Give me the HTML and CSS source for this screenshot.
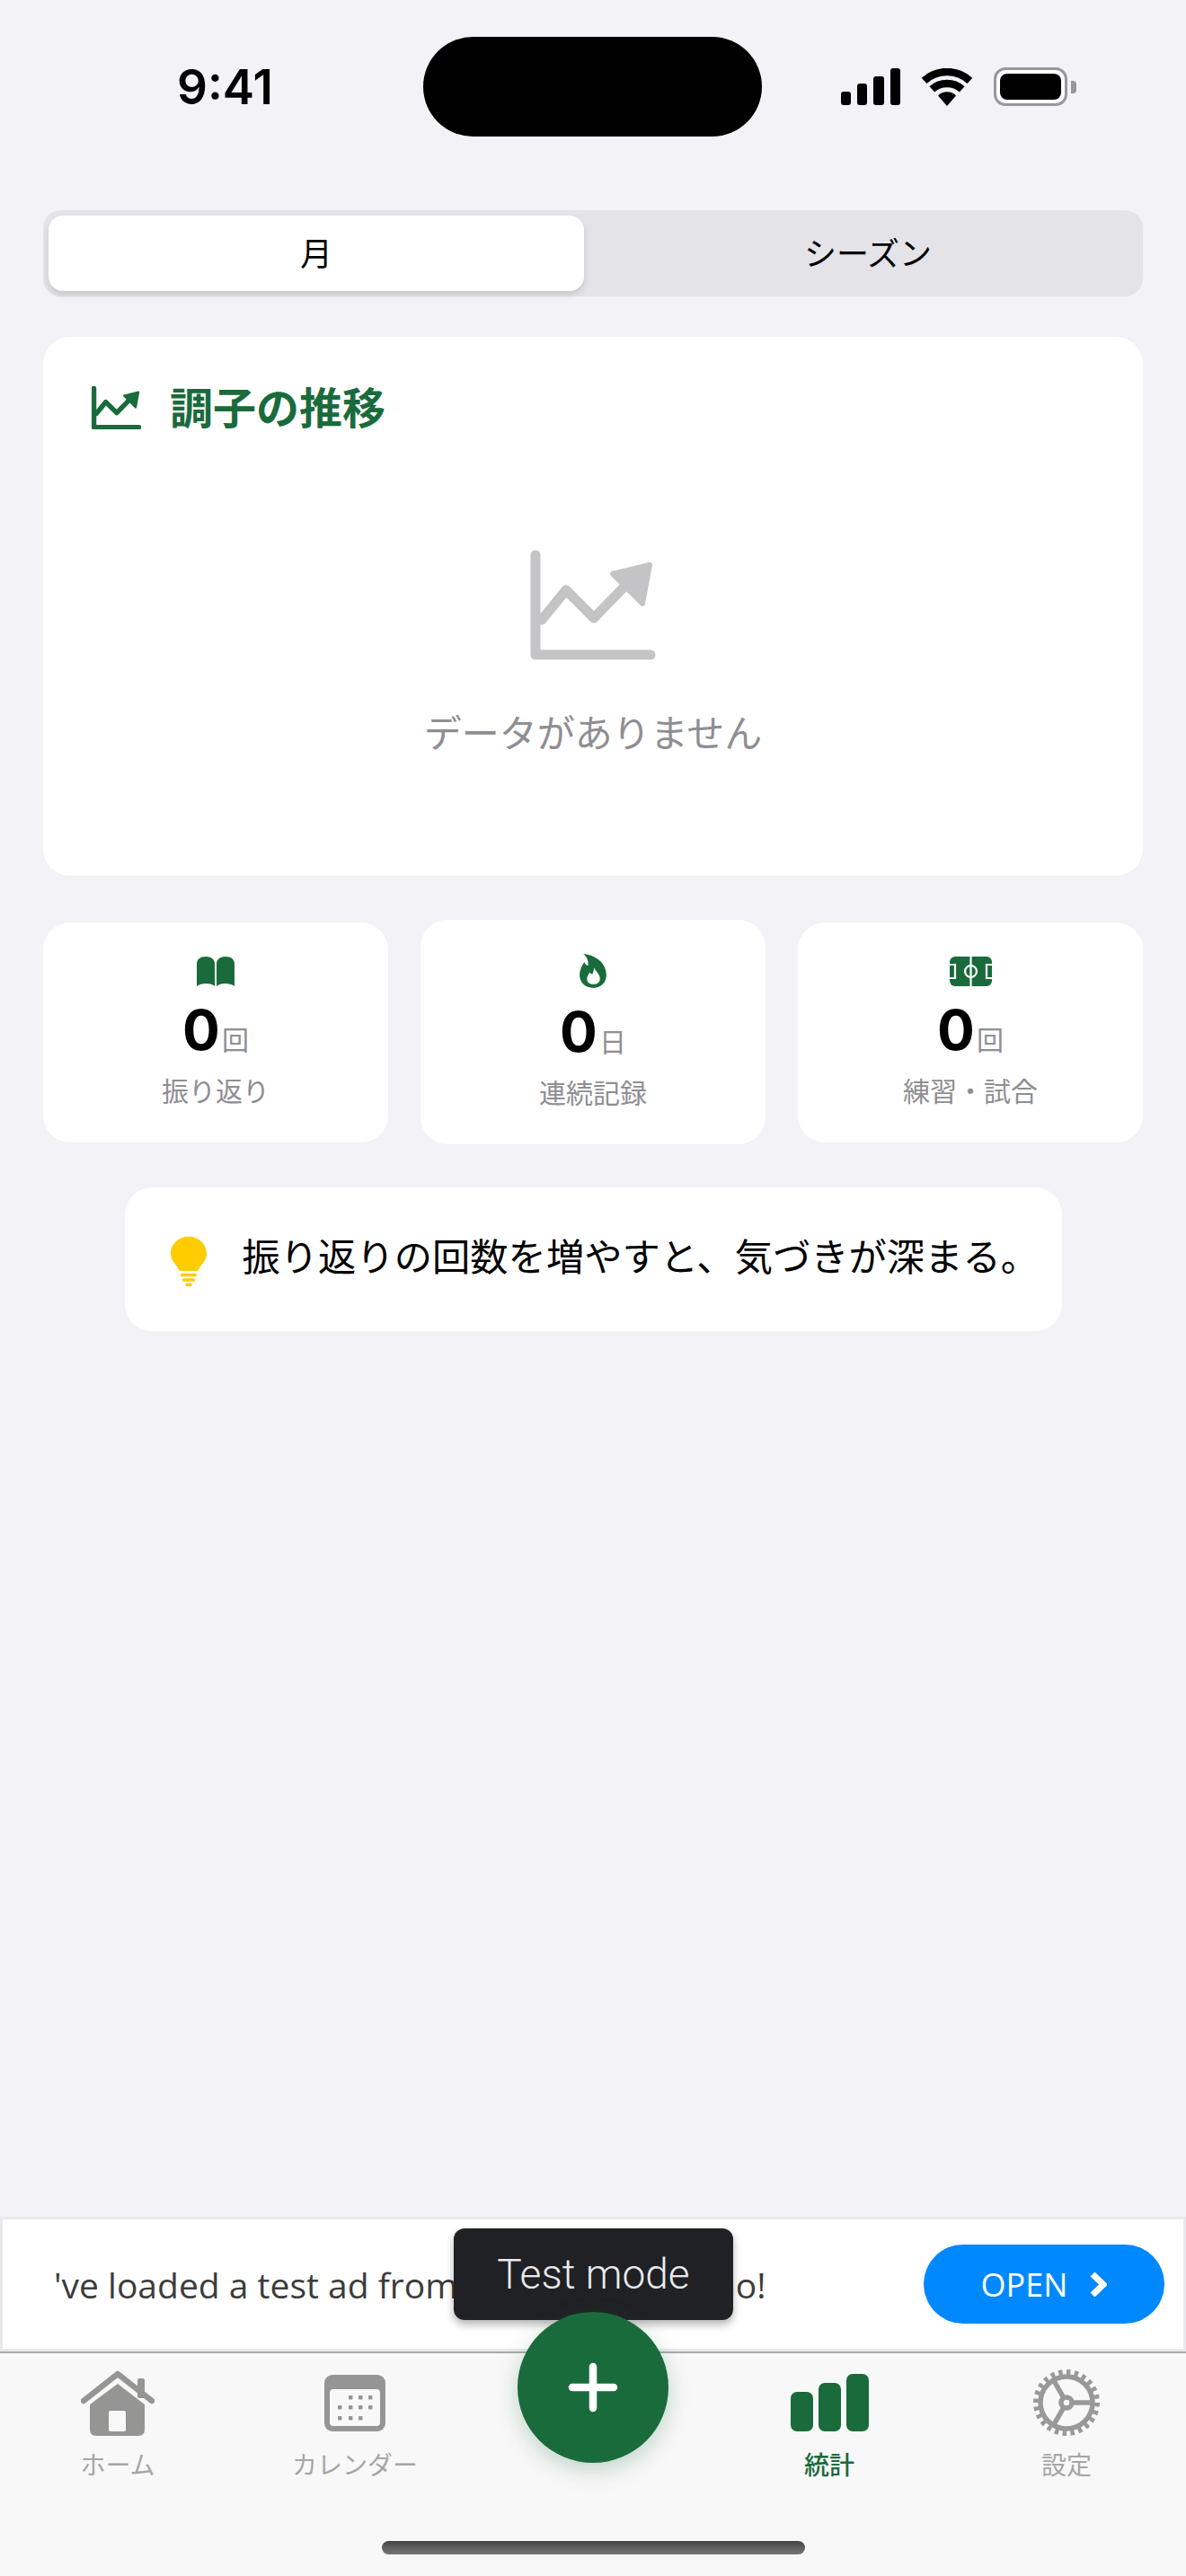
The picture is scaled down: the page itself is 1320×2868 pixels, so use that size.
FILE: index.html
```html
<!DOCTYPE html>
<html lang="ja">
<head>
<meta charset="utf-8">
<title>統計</title>
<link rel="stylesheet" href="styles.css">
</head>
<body>
<div class="screen">
  <header class="status">
    <span class="time">9:41</span>
    <div class="island"></div>
    <div class="status-icons">
      <svg class="signal" viewBox="0 0 66 41"><rect x="0" y="26" width="11" height="15" rx="3"/><rect x="18" y="17" width="11" height="24" rx="3"/><rect x="36" y="9" width="12" height="32" rx="3"/><rect x="55" y="0" width="11" height="41" rx="3"/></svg>
      <svg class="wifi" viewBox="0 0 58 42"><path class="wifi-arc" d="M3.6 13.8A38 38 0 0 1 54.4 13.8"/><path class="wifi-arc" d="M12.3 23.4A25 25 0 0 1 45.7 23.4"/><path d="M29 42L19 30.5A14 14 0 0 1 39 30.5Z"/></svg>
      <div class="battery"><div class="battery-body"><div class="battery-fill"></div></div><div class="battery-nub"></div></div>
    </div>
  </header>

  <main class="content">
    <div class="segment">
      <div class="seg-item seg-on">月</div>
      <div class="seg-item">シーズン</div>
    </div>

    <section class="chart-card">
      <h2 class="chart-title">
        <svg class="title-icon" viewBox="0 0 140 123"><path class="trend" d="M6 6V117H134"/><path class="trend" d="M13 78L40 45L71 76L108 38"/><path class="trend-head" d="M92 27L133 17L125 60Z"/></svg>
        <span class="title-text">調子の推移</span>
      </h2>
      <div class="empty">
        <svg class="empty-icon" viewBox="0 0 140 123"><path class="trend" d="M6 6V117H134"/><path class="trend" d="M13 78L40 45L71 76L108 38"/><path class="trend-head" d="M92 27L133 17L125 60Z"/></svg>
        <p class="empty-text">データがありません</p>
      </div>
    </section>

    <section class="stats">
      <div class="stat">
        <svg class="ic-book" viewBox="0 0 42 33"><path d="M0 8C0 3 4 0 10 0C16 0 20 3 20 8V33C16 29 5 29 0 33Z"/><path d="M22 8C22 3 26 0 32 0C38 0 42 3 42 8V33C37 29 26 29 22 33Z"/></svg>
        <div class="stat-value"><span class="num">0</span><span class="unit">回</span></div>
        <div class="stat-label">振り返り</div>
      </div>
      <div class="stat">
        <svg class="ic-flame" viewBox="0 0 29 37"><path d="M4 0C16 1 29 9 29 23C29 31 23 37 15 37C6 37 0 31 0 23C0 17 3 12 5 9C6 11 7 12 9 13C10 8 8 3 4 0Z"/><path class="flame-in" d="M16 15C17 19 22 21 22 27C22 31 19 33 15 33C11 33 8 31 8 27C8 24 10 22 11 20C12 22 13 22 14 22C15 20 15 17 16 15Z"/></svg>
        <div class="stat-value"><span class="num">0</span><span class="unit">日</span></div>
        <div class="stat-label">連続記録</div>
      </div>
      <div class="stat">
        <svg class="ic-field" viewBox="0 0 47 33"><rect width="47" height="33" rx="6"/><path class="field-line" d="M23.5 0V33M0 9H6V24H0M47 9H41V24H47"/><circle class="field-line" cx="23.5" cy="16.5" r="6.5"/></svg>
        <div class="stat-value"><span class="num">0</span><span class="unit">回</span></div>
        <div class="stat-label">練習・試合</div>
      </div>
    </section>

    <aside class="tip">
      <svg class="ic-bulb" viewBox="0 0 44 61"><path d="M22 0C10 0 0 9 0 21C0 30 7 34 11 42H33C37 34 44 30 44 21C44 9 34 0 22 0Z"/><rect x="12" y="45" width="20" height="4" rx="2"/><rect x="14" y="51" width="16" height="4" rx="2"/><rect x="18" y="57" width="8" height="4" rx="2"/></svg>
      <p class="tip-text">振り返りの回数を増やすと、気づきが深まる。</p>
    </aside>
  </main>

  <div class="ad">
    <div class="ad-text">'ve loaded a test ad from Google Pay Demo!</div>
    <div class="ad-btn">OPEN<svg class="ad-chev" viewBox="0 0 19 27"><path d="M3 2L15 13.5L3 25"/></svg></div>
  </div>

  <nav class="tabs">
    <div class="tab">
      <div class="tab-icon">
        <svg class="ic-home" viewBox="0 0 82 73"><rect class="home-fill" x="63" y="9" width="8" height="22" rx="2"/><path class="home-fill" d="M41 15L71 38V66Q71 73 64 73H17Q10 73 10 66V38Z"/><path class="home-roof" d="M3 34L41 4L79 34"/><rect class="home-door" x="31" y="45" width="19" height="23" rx="2"/></svg>
      </div>
      <span class="tab-label">ホーム</span>
    </div>
    <div class="tab">
      <div class="tab-icon">
        <svg class="ic-cal" viewBox="0 0 68 63"><rect class="cal-body" width="68" height="63" rx="9"/><rect class="cal-page" x="6" y="16" width="56" height="41" rx="4"/><g class="cal-body"><rect x="27" y="23" width="4.5" height="4.5" rx="1"/><rect x="38" y="23" width="4.5" height="4.5" rx="1"/><rect x="49" y="23" width="4.5" height="4.5" rx="1"/><rect x="15" y="34" width="4.5" height="4.5" rx="1"/><rect x="27" y="34" width="4.5" height="4.5" rx="1"/><rect x="38" y="34" width="4.5" height="4.5" rx="1"/><rect x="49" y="34" width="4.5" height="4.5" rx="1"/><rect x="15" y="46" width="4.5" height="4.5" rx="1"/><rect x="27" y="46" width="4.5" height="4.5" rx="1"/><rect x="38" y="46" width="4.5" height="4.5" rx="1"/></g></svg>
      </div>
      <span class="tab-label">カレンダー</span>
    </div>
    <div class="tab"></div>
    <div class="tab tab-on">
      <div class="tab-icon">
        <svg class="ic-bars" viewBox="0 0 87 64"><rect x="0" y="20" width="25" height="44" rx="7"/><rect x="31" y="10" width="25" height="54" rx="7"/><rect x="62" y="0" width="25" height="64" rx="7"/></svg>
      </div>
      <span class="tab-label">統計</span>
    </div>
    <div class="tab">
      <div class="tab-icon">
        <svg class="ic-gear" viewBox="0 0 74 74"><circle class="gear-teeth" cx="37" cy="37" r="33.5" pathLength="24"/><circle class="gear-line" cx="37" cy="37" r="29"/><circle class="gear-line" cx="37" cy="37" r="6"/><path class="gear-line" d="M43 37H66M34 31.8L22.5 11.9M34 42.2L22.5 62.1"/></svg>
      </div>
      <span class="tab-label">設定</span>
    </div>
    <div class="home-bar"></div>
  </nav>

  <div class="toast">Test mode</div>
  <button class="fab" type="button" aria-label="追加"><svg class="fab-plus" viewBox="0 0 56 56"><path d="M5 28H51M28 5V51"/></svg></button>
</div>
</body>
</html>
```
FILE: styles.css
```css
* { box-sizing: border-box; }
html, body { margin: 0; padding: 0; }
body {
  font-family: "Noto Sans CJK JP", "Liberation Sans", sans-serif;
  background: #f2f2f7;
  color: #000;
}
.screen {
  position: relative;
  width: 1320px;
  height: 2868px;
  display: flex;
  flex-direction: column;
  overflow: hidden;
  background: #f2f2f7;
}

/* status bar */
.status {
  height: 234px;
  padding: 41px 122px 0 197px;
  display: flex;
  align-items: flex-start;
  justify-content: space-between;
  flex: none;
}
.time {
  font-family: Inter, "Liberation Sans", sans-serif;
  font-weight: 600;
  font-size: 53px;
  line-height: 56px;
  margin-top: 28px;
  width: 274px;
}
.island { width: 377px; height: 111px; border-radius: 56px; background: #000; flex: none; }
.status-icons { display: flex; align-items: center; gap: 23px; margin-top: 34px; margin-left: 88px; }
.signal { width: 66px; height: 41px; display: block; }
.wifi { width: 58px; height: 42px; display: block; }
.wifi-arc { fill: none; stroke: #000; stroke-width: 8.5; }
.battery { display: flex; align-items: center; gap: 4px; }
.battery-body { width: 82px; height: 43px; border: 3px solid #98989c; border-radius: 13px; padding: 4px; background: #fff; }
.battery-fill { height: 100%; background: #000; border-radius: 8px; }
.battery-nub { width: 6px; height: 14px; background: #98989c; border-radius: 0 4px 4px 0; }

/* content */
.content { flex: 1; padding: 0 48px; display: flex; flex-direction: column; align-items: stretch; }
.segment { height: 96px; padding: 6px; background: #e3e3e8; border-radius: 20px; display: flex; }
.seg-item { flex: 1; display: flex; align-items: center; justify-content: center; font-size: 36px; line-height: 1; padding-bottom: 4px; }
.seg-on { background: #fff; border-radius: 16px; box-shadow: 0 4px 7px rgba(0, 0, 0, 0.12); margin-right: 16px; flex: 0 0 596px; }

.chart-card { margin-top: 45px; height: 600px; background: #fff; border-radius: 30px; padding: 55px 54px 0; display: flex; flex-direction: column; }
.chart-title { margin: 0; height: 48px; display: flex; align-items: center; gap: 32px; color: #1a6b3c; font-size: 48px; font-weight: 700; line-height: 48px; }
.title-text { flex: none; padding-bottom: 6px; }
.chart-title .trend { stroke-width: 14; }
.title-icon { width: 55px; height: 48px; flex: none; }
.trend { fill: none; stroke: currentColor; stroke-width: 11; stroke-linecap: round; stroke-linejoin: round; }
.trend-head { fill: currentColor; stroke: currentColor; stroke-width: 6; stroke-linejoin: round; }
.empty { display: flex; flex-direction: column; align-items: center; margin-top: 134px; color: #c4c4c6; }
.empty-icon { width: 140px; height: 123px; }
.empty-text { margin: 49px 0 0; font-size: 42px; line-height: 60px; color: #8e8e93; }

.stats { margin-top: 49px; display: grid; grid-template-columns: repeat(3, 1fr); gap: 36px; align-items: center; }
.stat { background: #fff; border-radius: 30px; padding: 38px 0 37px; display: flex; flex-direction: column; align-items: center; color: #1a6b3c; }
.stat svg { display: block; fill: currentColor; }
.ic-book { width: 42px; height: 33px; }
.ic-flame { width: 30px; height: 38px; }
.ic-field { width: 47px; height: 33px; }
.flame-in { fill: #fff; }
.field-line { fill: none; stroke: #fff; stroke-width: 2.2; }
.stat-value { margin-top: 16px; display: flex; align-items: baseline; gap: 5px; color: #000; height: 66px; }
.num { font-family: Inter, "Liberation Sans", sans-serif; font-size: 62px; font-weight: 700; line-height: 66px; letter-spacing: -3px; }
.unit { font-size: 30px; line-height: 40px; color: #8e8e93; }
.stat-label { margin-top: 11px; font-size: 30px; line-height: 44px; color: #8e8e93; }

.tip { margin-top: 48px; align-self: center; width: 1043px; height: 160px; background: #fff; border-radius: 30px; padding: 0 0 0 51px; display: flex; align-items: center; gap: 40px; }
.ic-bulb { width: 40px; height: 61px; flex: none; fill: #ffcc00; margin-top: 4px; }
.tip-text { margin: 0; padding-bottom: 11px; font-size: 42.3px; line-height: 60px; white-space: nowrap; }

/* ad banner */
.ad { flex: none; height: 150px; background: #fff; border: 3px solid #e9e9ec; display: flex; align-items: center; padding: 0 21px 0 57px; }
.ad-text { flex: 1; min-width: 0; font-family: "Open Sans", sans-serif; font-size: 39px; color: #3c3c3c; white-space: nowrap; overflow: hidden; }
.ad-btn { flex: none; width: 268px; height: 88px; border-radius: 44px; background: #0088ff; color: #fff; font-family: "Open Sans", sans-serif; font-size: 36px; display: flex; align-items: center; justify-content: center; gap: 25px; }
.ad-chev { width: 19px; height: 27px; fill: none; stroke: #fff; stroke-width: 7; }

/* tab bar */
.tabs { position: relative; flex: none; height: 250px; background: #f8f8f8; border-top: 2px solid #a8aaa8; display: grid; grid-template-columns: repeat(5, 264px); }
.tab { display: flex; flex-direction: column; align-items: center; padding-top: 17px; margin-left: -2px; color: #a6a6a6; }
.tab-icon { height: 76px; display: flex; align-items: center; justify-content: center; }
.tab-icon svg { display: block; }
.tab-label { margin-top: 10px; font-size: 28px; line-height: 40px; }
.tab-on { color: #1a6b3c; }
.tab-on .tab-label { font-weight: 500; }
.ic-home { width: 82px; height: 73px; }
.home-fill { fill: #959694; }
.home-roof { fill: none; stroke: #959694; stroke-width: 6.5; stroke-linecap: round; stroke-linejoin: round; }
.home-door { fill: #f8f8f8; }
.ic-cal { width: 68px; height: 63px; }
.cal-body { fill: #959694; }
.cal-page { fill: #f8f8f8; }
.ic-bars { width: 87px; height: 64px; fill: #1a6b3c; }
.ic-gear { width: 74px; height: 74px; }
.gear-teeth { fill: none; stroke: #999; stroke-width: 7; stroke-dasharray: 0.5 0.5; }
.gear-line { fill: none; stroke: #999; stroke-width: 5.5; }
.home-bar { position: absolute; left: 425px; top: 209px; width: 471px; height: 15px; border-radius: 8px; background: linear-gradient(#444, #777); }

/* overlays */
.toast { position: absolute; left: 505px; top: 2481px; width: 311px; height: 102px; border-radius: 12px; background: #202124; color: #e8eaed; font-family: Roboto, sans-serif; font-weight: 300; font-size: 46px; display: flex; align-items: center; justify-content: center; box-shadow: 0 5px 10px rgba(0, 0, 0, 0.3); }
.fab { position: absolute; left: 576px; top: 2574px; width: 168px; height: 168px; border: 0; padding: 0; border-radius: 50%; background: #1a6b3c; display: flex; align-items: center; justify-content: center; box-shadow: 0 8px 24px rgba(26, 107, 60, 0.25); }
.fab-plus { width: 56px; height: 56px; fill: none; stroke: #fff; stroke-width: 8.5; stroke-linecap: round; }
```
